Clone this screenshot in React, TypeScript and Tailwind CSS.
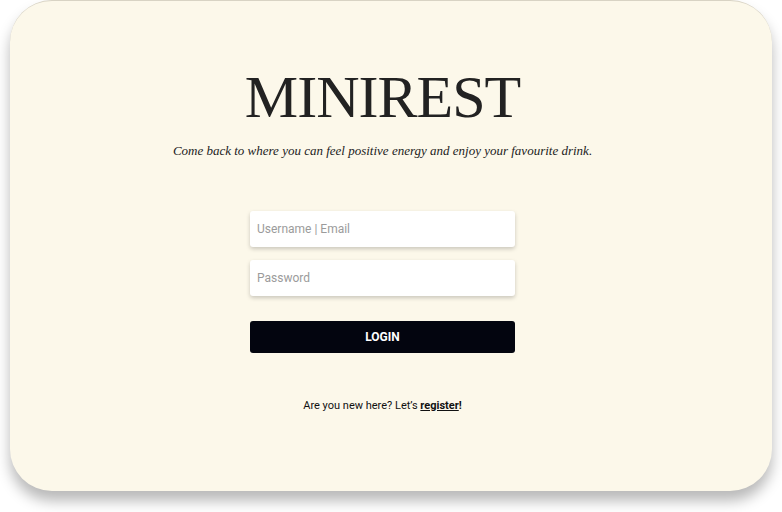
export default function App() {
  return (
    <div className="h-[512px] w-full bg-white px-[10px]">
      <div className="flex h-[491px] flex-col items-center rounded-[42px] border-t border-[#d8d3c4] bg-[#fcf8ea] pr-[17px] shadow-[0_10px_14px_rgba(0,0,0,0.28)]">
        <h1 className="mt-[66px] font-['Liberation_Serif',serif] text-[60px] leading-none tracking-[-1px] text-[#222]">
          MINIREST
        </h1>
        <p className="mt-[14px] font-['Liberation_Serif',serif] text-[13px] italic text-[#222]">
          Come back to where you can feel positive energy and enjoy your favourite drink.
        </p>

        <form className="mt-[50px] flex w-[265px] flex-col font-['Roboto',sans-serif]">
          <input
            type="text"
            placeholder="Username | Email"
            className="h-[36px] rounded-[3px] bg-white px-[7px] text-[12px] text-[#333] shadow-[0_2px_4px_rgba(0,0,0,0.2)] outline-none placeholder:text-[#9b9b9b]"
          />
          <input
            type="password"
            placeholder="Password"
            className="mt-[13px] h-[36px] rounded-[3px] bg-white px-[7px] text-[12px] text-[#333] shadow-[0_2px_4px_rgba(0,0,0,0.2)] outline-none placeholder:text-[#9b9b9b]"
          />
          <button
            type="button"
            className="mt-[25px] h-[32px] rounded-[3px] bg-[#03050f] text-[12px] font-bold text-white"
          >
            LOGIN
          </button>
        </form>

        <p className="mt-[45px] font-['Roboto',sans-serif] text-[11px] text-[#111]">
          Are you new here? Let’s{" "}
          <a href="#" className="font-bold underline">
            register
          </a>
          <span className="font-bold">!</span>
        </p>
      </div>
    </div>
  );
}
